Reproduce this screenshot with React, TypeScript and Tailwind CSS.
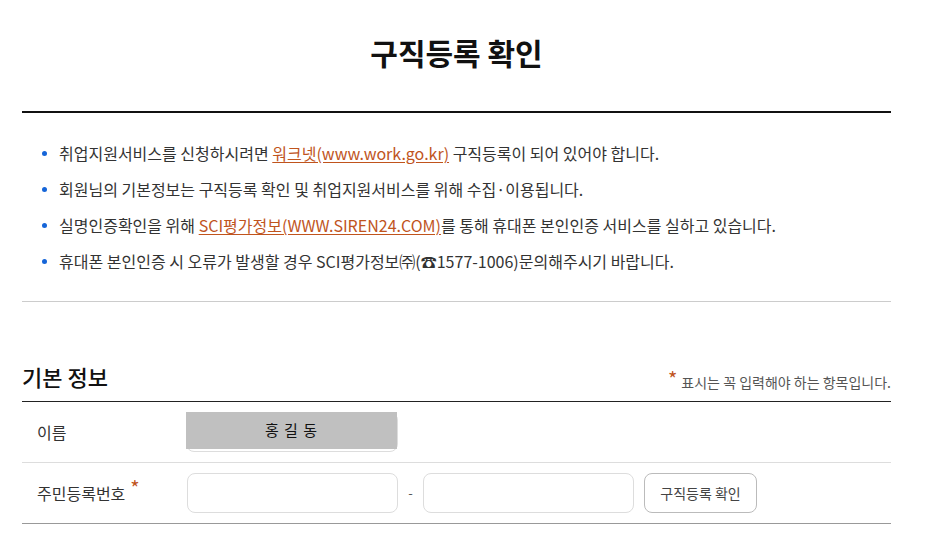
import React from "react";

const font = { fontFamily: '"Noto Sans CJK KR", "Noto Sans", sans-serif' };

function Bullet({ children }: { children: React.ReactNode }) {
  return (
    <li className="flex h-[36px] items-center">
      <span className="ml-[20px] mr-[12px] h-[5px] w-[5px] rounded-full bg-[#1565d8]" />
      <span className="-mt-[1px] text-[16px] text-[#333]">{children}</span>
    </li>
  );
}

export default function App() {
  return (
    <div className="min-h-[551px] bg-white" style={font}>
      <div className="ml-[22px] w-[869px] pt-[32px]">
        <h1 className="text-center text-[30px] font-bold leading-[40px] text-[#111]">구직등록 확인</h1>
        <div className="mt-[39px] border-t-2 border-[#111]" />
        <ul className="pt-[22px] pb-[22px]">
          <Bullet>
            취업지원서비스를 신청하시려면{" "}
            <a className="text-[#c0541d] underline underline-offset-2">워크넷(www.work.go.kr)</a> 구직등록이 되어 있어야 합니다.
          </Bullet>
          <Bullet>회원님의 기본정보는 구직등록 확인 및 취업지원서비스를 위해 수집·이용됩니다.</Bullet>
          <Bullet>
            실명인증확인을 위해{" "}
            <a className="text-[#c0541d] underline underline-offset-2">SCI평가정보(WWW.SIREN24.COM)</a>를 통해 휴대폰 본인인증 서비스를 실하고 있습니다.
          </Bullet>
          <Bullet>휴대폰 본인인증 시 오류가 발생할 경우 SCI평가정보㈜(☎1577-1006)문의해주시기 바랍니다.</Bullet>
        </ul>
        <div className="border-t border-[#ccc]" />

        <div className="mt-[59px] flex items-end justify-between pb-[10px]">
          <h2 className="text-[22px] font-medium leading-[30px] text-[#111]">기본 정보</h2>
          <p className="text-[14px] leading-[18px] text-[#555]">
            <span className="mr-[4px] align-top text-[20px] leading-[12px] text-[#c0541d]">*</span>
            표시는 꼭 입력해야 하는 항목입니다.
          </p>
        </div>

        <div className="border-t border-[#222]">
          <div className="flex h-[61px] items-center border-b border-[#ddd]">
            <div className="w-[164px] pl-[15px] text-[16px] text-[#333]">이름</div>
            <div className="relative h-[40px] w-[212px] rounded-lg border border-[#ddd]">
              <div className="absolute left-[-1px] top-[-1px] flex h-[37px] w-[211px] items-center justify-center bg-[#c0c0c0] text-[15px] tracking-[1px] text-[#111]">
                홍 길 동
              </div>
            </div>
          </div>
          <div className="flex h-[61px] items-center border-b border-[#999]">
            <div className="flex w-[165px] items-center pl-[15px] text-[16px] text-[#333]">
              주민등록번호
              <span className="ml-[5px] -mt-[10px] text-[20px] leading-[14px] text-[#c0541d]">*</span>
            </div>
            <div className="h-[40px] w-[211px] rounded-lg border border-[#ddd]" />
            <div className="w-[25px] text-center text-[13px] text-[#555]">-</div>
            <div className="h-[40px] w-[211px] rounded-lg border border-[#ddd]" />
            <button className="ml-[10px] h-[40px] w-[113px] rounded-lg border border-[#bbb] text-[14px] text-[#444]">
              구직등록 확인
            </button>
          </div>
        </div>
      </div>
    </div>
  );
}
